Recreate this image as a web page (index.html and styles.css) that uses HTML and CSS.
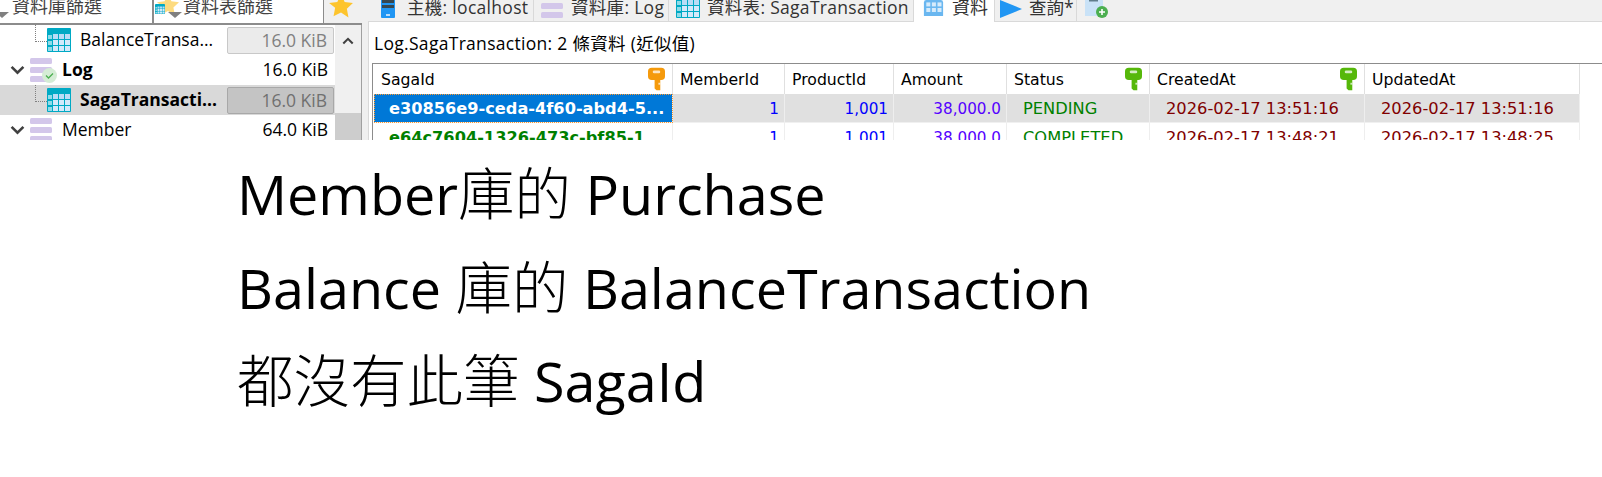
FILE: index.html
```html
<!DOCTYPE html>
<html lang="zh-Hant">
<head>
  <meta charset="UTF-8">
  <title>Log.SagaTransaction</title>
  <link rel="stylesheet" href="styles.css">
</head>
<body>
  <svg class="defs" width="0" height="0">
    <symbol id="table" viewBox="0 0 24 24">
      <rect x="0" y="0" width="24" height="24" rx="1" fill="#00a9c4"/>
      <rect x="6" y="6" width="5" height="5" fill="#b9dcf6"/><rect x="12" y="6" width="5" height="5" fill="#b9dcf6"/><rect x="18" y="6" width="5" height="5" fill="#b9dcf6"/>
      <rect x="6" y="12" width="5" height="5" fill="#d4e9fa"/><rect x="12" y="12" width="5" height="5" fill="#d4e9fa"/><rect x="18" y="12" width="5" height="5" fill="#d4e9fa"/>
      <rect x="6" y="18" width="5" height="5" fill="#d4e9fa"/><rect x="12" y="18" width="5" height="5" fill="#d4e9fa"/><rect x="18" y="18" width="5" height="5" fill="#d4e9fa"/>
      <rect x="1" y="7" width="4" height="4" fill="#8fdbe8"/><rect x="1" y="13" width="4" height="4" fill="#8fdbe8"/><rect x="1" y="19" width="4" height="4" fill="#8fdbe8"/>
    </symbol>
    <symbol id="db" viewBox="0 0 22 24">
      <rect x="0" y="0" width="22" height="6" rx="1.5" fill="#d3c7ea"/>
      <rect x="0" y="9" width="22" height="6" rx="1.5" fill="#d3c7ea"/>
      <rect x="0" y="18" width="22" height="6" rx="1.5" fill="#d3c7ea"/>
    </symbol>
    <symbol id="key" viewBox="0 0 18 24">
      <path d="M4 0h10q4 0 4 4v5q0 4-4 4h-1v11h-4l-2-2v-9H4q-4 0-4-4V4q0-4 4-4z" fill="currentColor"/>
      <rect x="5" y="3" width="8" height="3" rx="1.5" fill="#fff" opacity=".75"/>
      <rect x="11" y="16" width="2" height="2" fill="#fff" opacity=".7"/>
    </symbol>
    <symbol id="star" viewBox="0 0 24 24">
      <path d="M12 1l3.400 7.200 7.600 1-5.600 5.400 1.500 7.900L12 18l-6.900 3.500 1.500-7.900L1 9.200l7.600-1z" fill="#fdc42d"/>
    </symbol>
    <symbol id="server" viewBox="0 0 14 24">
      <rect width="14" height="24" rx="1" fill="#2196f3"/>
      <rect x="1" y="6" width="12" height="3" fill="#37474f"/>
      <rect x="1" y="11" width="12" height="3" fill="#37474f"/>
      <rect x="5" y="20" width="4" height="2" fill="#bbdefb"/>
    </symbol>
    <symbol id="chevron" viewBox="0 0 14 9">
      <path d="M1.500 1.500L7 7l5.500-5.500" fill="none" stroke="#404040" stroke-width="2.400"/>
    </symbol>
  </svg>

  <div class="app">
    <aside class="side">
      <div class="filters">
        <div class="filter filter-db"><span class="caret"></span>資料庫篩選</div>
        <div class="filter filter-tbl">
          <span class="filter-ico">
            <svg class="ico-star-bg"><use href="#star"/></svg>
            <svg class="ico-tbl-sm"><use href="#table"/></svg>
          </span>
          <span class="caret"></span>資料表篩選
        </div>
        <div class="fav"><svg><use href="#star"/></svg></div>
      </div>
      <div class="tree-box">
        <div class="tree">
          <div class="row row-child">
            <span class="link"></span>
            <svg class="ico-table"><use href="#table"/></svg>
            <span class="name">BalanceTransa...</span>
            <span class="size size-bar">16.0 KiB</span>
          </div>
          <div class="row">
            <svg class="chev"><use href="#chevron"/></svg>
            <span class="db-wrap">
              <svg class="ico-db"><use href="#db"/></svg>
              <span class="check">
                <svg viewBox="0 0 15 15"><path d="M4 7.500l2.500 2.500 4.500-4.500" fill="none" stroke="#4caf50" stroke-width="1.300"/></svg>
              </span>
            </span>
            <span class="name name-db bold">Log</span>
            <span class="size size-plain">16.0 KiB</span>
          </div>
          <div class="row row-child row-on">
            <span class="link"></span>
            <svg class="ico-table"><use href="#table"/></svg>
            <span class="name bold">SagaTransacti...</span>
            <span class="size size-bar">16.0 KiB</span>
          </div>
          <div class="row">
            <svg class="chev"><use href="#chevron"/></svg>
            <span class="db-wrap"><svg class="ico-db"><use href="#db"/></svg></span>
            <span class="name name-db">Member</span>
            <span class="size size-plain">64.0 KiB</span>
          </div>
        </div>
        <div class="scroll">
          <div class="scroll-up"><svg><use href="#chevron"/></svg></div>
          <div class="thumb"></div>
        </div>
      </div>
    </aside>

    <main class="main">
      <div class="tabs">
        <div class="tab tab-host"><svg class="tab-server"><use href="#server"/></svg>主機: localhost</div>
        <div class="tab tab-db"><svg class="tab-dbico"><use href="#db"/></svg>資料庫: Log</div>
        <div class="tab tab-tbl"><svg class="tab-table"><use href="#table"/></svg>資料表: SagaTransaction</div>
        <div class="tab tab-data">
          <svg class="tab-grid" viewBox="0 0 24 20">
            <rect width="24" height="22" rx="3" fill="#6ab7f0"/>
            <rect x="3" y="3" width="5" height="5" fill="#d6ebfb"/><rect x="10" y="3" width="5" height="5" fill="#d6ebfb"/><rect x="17" y="3" width="5" height="5" fill="#d6ebfb"/>
            <rect x="3" y="10" width="5" height="5" fill="#d6ebfb"/><rect x="10" y="10" width="5" height="5" fill="#d6ebfb"/><rect x="17" y="10" width="5" height="5" fill="#d6ebfb"/>
          </svg>資料
        </div>
        <div class="tab tab-query"><svg class="tab-play" viewBox="0 0 22 18"><path d="M0 0l22 9-22 9z" fill="#2196f3"/></svg>查詢*</div>
        <div class="tab tab-new">
          <svg class="tab-add" viewBox="0 0 24 18">
            <rect x="0" y="0" width="18" height="16" fill="#c9e2f7"/>
            <rect x="4" y="0" width="9" height="1.500" fill="#607d8b"/>
            <circle cx="17" cy="12" r="6" fill="#4caf50"/>
            <path d="M17 9v6M14 12h6" stroke="#fff" stroke-width="1.600"/>
          </svg>
        </div>
      </div>
      <div class="panel">
        <div class="caption">Log.SagaTransaction: 2 條資料 (近似值)</div>
        <div class="grid">
          <div class="th">SagaId<svg class="key key-orange"><use href="#key"/></svg></div>
          <div class="th">MemberId</div>
          <div class="th">ProductId</div>
          <div class="th">Amount</div>
          <div class="th">Status<svg class="key key-green"><use href="#key"/></svg></div>
          <div class="th">CreatedAt<svg class="key key-green"><use href="#key"/></svg></div>
          <div class="th">UpdatedAt</div>

          <div class="td td-id td-sel">e30856e9-ceda-4f60-abd4-5...</div>
          <div class="td td-num shade">1</div>
          <div class="td td-num shade">1,001</div>
          <div class="td td-amt shade">38,000.0</div>
          <div class="td td-status shade">PENDING</div>
          <div class="td td-date shade">2026-02-17 13:51:16</div>
          <div class="td td-date shade">2026-02-17 13:51:16</div>

          <div class="td td-id">e64c7604-1326-473c-bf85-1...</div>
          <div class="td td-num">1</div>
          <div class="td td-num">1,001</div>
          <div class="td td-amt">38,000.0</div>
          <div class="td td-status">COMPLETED</div>
          <div class="td td-date">2026-02-17 13:48:21</div>
          <div class="td td-date">2026-02-17 13:48:25</div>
        </div>
      </div>
    </main>
  </div>

  <div class="notes">
    <p>Member<span class="cjk">庫的</span> Purchase</p>
    <p>Balance <span class="cjk">庫的</span> BalanceTransaction</p>
    <p><span class="cjk">都沒有此筆</span> SagaId</p>
  </div>
</body>
</html>
```

FILE: styles.css
```css
body {
  margin: 0;
  background-color: #fff;
  color: #000;
  font-family: "Open Sans", "Noto Sans CJK TC", sans-serif;
}

.defs {
  display: block;
  height: 0;
}

.app {
  display: flex;
  height: 140px;
  overflow: hidden;
  font-size: 17.5px;
  background-color: #f0f0f0;
}

/* left side: filters + tree */
.side {
  width: 362px;
  flex: none;
}

.filters {
  display: flex;
  height: 23px;
  border-bottom: 2px solid #8c8c8c;
  color: #444;
  font-size: 18px;
  line-height: 12px;
}

.filter {
  position: relative;
  background-color: #fff;
  overflow: hidden;
  box-sizing: border-box;
  border-right: 2px solid #8c8c8c;
}

.filter-db {
  width: 154px;
  padding-left: 12px;
}

.filter-tbl {
  width: 170px;
  padding-left: 29px;
  border-right-width: 1px;
}

.caret {
  position: absolute;
  left: -5px;
  top: 12px;
  border-left: 7px solid transparent;
  border-right: 7px solid transparent;
  border-top: 6px solid #808080;
}

.filter-tbl .caret {
  left: 14px;
}

.filter-ico {
  position: absolute;
  left: 1px;
  top: 0;
}

.ico-star-bg {
  position: absolute;
  left: 1px;
  top: -7px;
  width: 24px;
  height: 24px;
  opacity: .6;
}

.ico-tbl-sm {
  position: absolute;
  left: 0;
  top: 4px;
  width: 10px;
  height: 10px;
}

.fav {
  padding-left: 4px;
}

.fav svg {
  display: block;
  width: 26px;
  height: 26px;
  margin-top: -7px;
}

.tree-box {
  display: flex;
  height: 115px;
  background-color: #fff;
  border-right: 1px solid #a0a0a0;
}

.tree {
  flex: 1;
}

.row {
  position: relative;
  display: flex;
  align-items: center;
  height: 30px;
  padding-left: 10px;
  padding-right: 1px;
}

.row-child {
  padding-left: 47px;
}

.row-on {
  background-color: #d9d9d9;
}

.link {
  position: absolute;
  left: 35px;
  top: 0;
  width: 11px;
  height: 16px;
  border-left: 1px dotted #808080;
  border-bottom: 1px dotted #808080;
}

.ico-table {
  width: 24px;
  height: 24px;
  flex: none;
}

.chev {
  width: 15px;
  height: 10px;
  flex: none;
}

.db-wrap {
  position: relative;
  width: 22px;
  height: 24px;
  margin-left: 5px;
  flex: none;
}

.ico-db {
  display: block;
  width: 22px;
  height: 24px;
}

.check {
  position: absolute;
  right: -5px;
  bottom: -1px;
  width: 15px;
  height: 15px;
  border-radius: 50%;
  background-color: #d5ecd5;
}

.check svg {
  display: block;
}

.name {
  margin-left: 9px;
  padding-bottom: 2px;
  white-space: nowrap;
}

.name-db {
  margin-left: 10px;
}

.bold {
  font-weight: 700;
}

.size {
  margin-left: auto;
  width: 107px;
  box-sizing: border-box;
  padding-right: 6px;
  text-align: right;
  white-space: nowrap;
}

.size-plain {
  padding-bottom: 2px;
}

.size-bar {
  height: 27px;
  line-height: 24px;
  background-color: #ebebeb;
  border: 1px solid #c8c8c8;
  border-radius: 2px;
  color: #808080;
}

.row-on .size-bar {
  background-color: #c4c4c4;
  border-color: #a8a8a8;
  color: #707070;
}

.scroll {
  width: 26px;
  flex: none;
  background-color: #f0f0f0;
}

.scroll-up {
  height: 88px;
  padding-top: 12px;
  box-sizing: border-box;
}

.scroll-up svg {
  display: block;
  width: 12px;
  height: 8px;
  margin: 0 auto;
  transform: rotate(180deg);
}

.thumb {
  height: 60px;
  background-color: #cdcdcd;
}

/* right side: tabs + data grid */
.main {
  flex: 1;
  min-width: 0;
  margin-left: 6px;
}

.tabs {
  display: flex;
  height: 21px;
  border-bottom: 1px solid #d9d9d9;
  padding-left: 2px;
  font-size: 17.5px;
  line-height: 14px;
  color: #333;
  letter-spacing: .3px;
}

.tab {
  display: flex;
  box-sizing: border-box;
  border-right: 1px solid #d9d9d9;
  white-space: nowrap;
  overflow: hidden;
}

.tab svg {
  flex: none;
}

.tab-host {
  width: 164px;
  padding-left: 11px;
}

.tab-server {
  width: 14px;
  height: 24px;
  margin: -6px 12px 0 0;
}

.tab-db {
  width: 135px;
  padding-left: 7px;
}

.tab-dbico {
  width: 22px;
  height: 24px;
  margin: -6px 8px 0 0;
}

.tab-tbl {
  width: 245px;
  padding-left: 7px;
}

.tab-table {
  width: 24px;
  height: 24px;
  margin: -6px 7px 0 0;
}

.tab-data {
  width: 81px;
  height: 22px;
  padding-left: 8px;
  background-color: #fff;
  font-size: 18px;
  letter-spacing: 0;
}

.tab-grid {
  width: 23px;
  height: 16px;
  margin-right: 7px;
}

.tab-query {
  width: 82px;
  padding-left: 5px;
  letter-spacing: 0;
}

.tab-play {
  width: 22px;
  height: 18px;
  margin-right: 7px;
}

.tab-new {
  padding-left: 8px;
  border-right: 0;
}

.tab-add {
  width: 24px;
  height: 18px;
}

.panel {
  background-color: #fff;
  border-left: 1px solid #d9d9d9;
  padding-left: 3px;
}

.caption {
  height: 41px;
  padding-left: 2px;
  line-height: 42px;
  letter-spacing: .3px;
}

.grid {
  display: grid;
  grid-template-columns: 299px 112px 109px 113px 143px 215px 215px;
  grid-template-rows: 30px 29px 29px;
  border-top: 1px solid #8c8c8c;
  border-left: 1px solid #8c8c8c;
  padding-left: 1px;
  font-family: "DejaVu Sans", sans-serif;
}

.th {
  display: flex;
  justify-content: space-between;
  align-items: center;
  padding: 0 7px;
  border-right: 1px solid #e0e0e0;
  font-size: 15.7px;
}

.key {
  width: 17px;
  height: 24px;
  flex: none;
}

.key-orange {
  color: #f59a0c;
}

.key-green {
  color: #56b80a;
}

.td {
  padding-top: 1px;
  border-right: 1px solid #eee;
  border-bottom: 1px solid #f0f0f0;
  font-size: 16.3px;
  line-height: 28px;
  white-space: nowrap;
  overflow: hidden;
}

.shade {
  background-color: #e0e0e0;
}

.td-id {
  padding-left: 15px;
  font-size: 16.2px;
  font-weight: 700;
  color: #008000;
}

.td-sel {
  background-color: #0078d7;
  color: #fff;
  outline: 1px dotted #ff9a2e;
  outline-offset: -1px;
}

.td-num {
  padding-right: 5px;
  font-size: 15.2px;
  text-align: right;
  color: #0000ff;
}

.td-amt {
  padding-right: 5px;
  font-size: 15.2px;
  text-align: right;
  color: #5500ff;
}

.td-status {
  padding-left: 16px;
  color: #008000;
}

.td-date {
  padding-left: 16px;
  color: #800000;
}

/* notes under the screenshot */
.notes {
  padding: 7px 0 0 237px;
  font-size: 55.7px;
  line-height: 93.5px;
}

.notes p {
  margin: 0;
  white-space: nowrap;
}

.cjk {
  font-size: 56.5px;
  font-weight: 300;
}
```
